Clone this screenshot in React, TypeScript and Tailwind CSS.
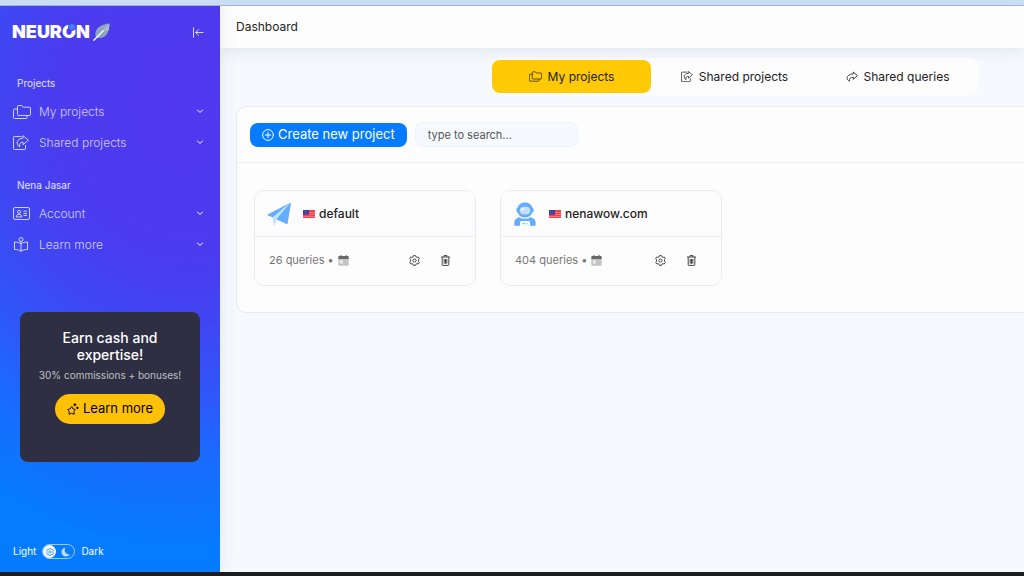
import React, { useState } from "react";

type IconProps = { className?: string };

const FoldersIcon: React.FC<IconProps> = ({ className }) => (
  <svg viewBox="0 0 18 14" fill="none" stroke="currentColor" strokeLinejoin="round" className={className} aria-hidden="true">
    <path d="M4.500 1.300c0-.4.3-.8.8-.8h3.400l1.600 1.700h6.400c.4 0 .8.300.8.800v6.600c0 .5-.4.900-.8.900H5.300c-.5 0-.8-.4-.8-.9z" />
    <path d="M4.500 4H1.300c-.4 0-.8.4-.8.800v7.900c0 .4.4.8.8.8h11.900c.4 0 .8-.4.8-.8v-2.200" />
  </svg>
);

const ShareBoxIcon: React.FC<IconProps> = ({ className }) => (
  <svg viewBox="0 0 16 15" fill="none" stroke="currentColor" strokeLinejoin="round" className={className} aria-hidden="true">
    <path d="M8.500 1.500H1.300c-.5 0-.8.300-.8.800v11.400c0 .5.300.8.8.8h10.400c.5 0 .8-.3.8-.8V10" />
    <path d="M10 .7 15.400 5.200 10 9.700V7.200C7.400 7 6.300 8.300 6.600 11.800 2.600 9.500 3.300 3.600 10 3.200z" />
  </svg>
);

const ArrowIcon: React.FC<IconProps> = ({ className }) => (
  <svg viewBox="0 0 14 12" fill="none" stroke="currentColor" strokeLinejoin="round" className={className} aria-hidden="true">
    <path d="M8.500.8 13.400 5 8.500 9.200V6.900C5.300 6.700 3.800 8.500 4 11.300-.8 9.500.5 3.200 8.500 3.100z" />
  </svg>
);

const AccountIcon: React.FC<IconProps> = ({ className }) => (
  <svg viewBox="0 0 17 13" fill="none" stroke="currentColor" className={className} aria-hidden="true">
    <rect x=".5" y=".5" width="16" height="12" rx="1.500" />
    <circle cx="6" cy="4.800" r="1.500" />
    <path d="M3.200 10c0-3.600 5.600-3.600 5.600 0zM10.500 4.200h3.500M10.500 6.500h3.500M10.500 8.500h3.500" />
  </svg>
);

const ReaderIcon: React.FC<IconProps> = ({ className }) => (
  <svg viewBox="0 0 16 15" fill="none" stroke="currentColor" strokeLinejoin="round" className={className} aria-hidden="true">
    <circle cx="8" cy="2.500" r="2" />
    <path d="M8 6.800C6.500 5.600 4 5 1.500 5v7.500c2.500 0 5 .5 6.500 1.700 1.500-1.200 4-1.700 6.500-1.700V5C12 5 9.500 5.600 8 6.800zM8 4.500v10" />
  </svg>
);

const ChevronIcon: React.FC<IconProps> = ({ className }) => (
  <svg viewBox="0 0 8 5" fill="none" stroke="currentColor" strokeLinecap="round" strokeLinejoin="round" className={className} aria-hidden="true">
    <path d="M1.500 1 4 3.500 6.500 1" />
  </svg>
);

const CollapseIcon: React.FC<IconProps> = ({ className }) => (
  <svg viewBox="0 0 12 11" fill="none" stroke="currentColor" strokeLinecap="round" strokeLinejoin="round" className={className} aria-hidden="true">
    <path d="M1.500.7v9.600M11 5.500H3.700M6.500 2.700 3.700 5.500l2.800 2.800" />
  </svg>
);

const FeatherIcon: React.FC<IconProps> = ({ className }) => (
  <svg viewBox="0 0 17 18" className={className} aria-hidden="true">
    <path d="M16.500.5C9 1 3.500 4.500 2.500 9.500c-.3 1.500-.2 3 .3 4.500l1.200 1.200c5.500 0 9-1.700 10.500-5.200C15.700 7 16.300 4 16.500.5z" fill="#8fa3bd" />
    <path d="M16.500.5C13 3 10 6 7.500 9.500c3-1 6-1.600 8-1.800.6-2.500.9-4.900 1-7.200z" fill="#a9b8ca" />
    <path d="M.8 17.200 10 8" stroke="#fff" strokeWidth="1.300" strokeLinecap="round" />
  </svg>
);

const SparkleStarIcon: React.FC<IconProps> = ({ className }) => (
  <svg viewBox="0 0 13 13" fill="none" stroke="currentColor" strokeLinejoin="round" className={className} aria-hidden="true">
    <path d="M5.200 3.700 6.300 6.200 9 7 7.500 9.200l.3 3-2.800-1-2.800 1.100.2-3L.8 7.100l2.800-.9z" />
    <path d="M8.500.3v3.200M6.900 1.900h3.200M11.300 4v2.600M10 5.300h2.600" strokeWidth="1.300" />
  </svg>
);

const PlusCircleIcon: React.FC<IconProps> = ({ className }) => (
  <svg viewBox="0 0 12 12" fill="none" stroke="currentColor" strokeLinecap="round" className={className} aria-hidden="true">
    <circle cx="6" cy="6" r="5.400" />
    <path d="M6 3.300v5.400M3.300 6h5.400" />
  </svg>
);

const PlaneIcon: React.FC<IconProps> = ({ className }) => (
  <svg viewBox="0 0 24 24" className={className} aria-hidden="true">
    <path d="M23.200.8 1 12.300c-.5.300-.5 1 .1 1.200l4.800 1.900z" fill="#62adfd" />
    <path d="M5.900 15.400 23.200.8 9.300 17.200 7.900 23.200c-.3.500-1 .4-1.100-.2z" fill="#c3dffe" />
    <path d="M23.200.8c.4-.2.800.1.700.6L20.600 21.500c-.1.500-.6.800-1.100.6L9.300 17.200z" fill="#62adfd" />
  </svg>
);

const AstronautIcon: React.FC<IconProps> = ({ className }) => (
  <svg viewBox="0 0 22 24" className={className} aria-hidden="true">
    <path d="M11 .5a8 8 0 0 1 7.500 5.200c.7.200 1.100.8 1.100 1.600v1.600c0 .8-.5 1.400-1.200 1.600a8 8 0 0 1-14.800 0c-.7-.2-1.200-.8-1.200-1.600V7.300c0-.8.4-1.400 1.100-1.600A8 8 0 0 1 11 .5z" fill="#62adfd" />
    <rect x="5.800" y="4.800" width="10.400" height="7.600" rx="3.800" fill="#c3dffe" />
    <path d="M7.800 8.300c0-1 .6-1.700 1.700-1.700" stroke="#fff" strokeWidth="1.200" fill="none" strokeLinecap="round" />
    <path d="M5.500 15.300c3.300 2 7.700 2 11 0 3 .4 5.200 2.700 5.200 5.700v1.500c0 .8-.6 1.300-1.300 1.300H16v-3.300c0-.8-.6-1.400-1.400-1.400H7.400c-.8 0-1.400.6-1.400 1.400v3.300H1.600c-.7 0-1.300-.5-1.300-1.300V21c0-3 2.200-5.300 5.200-5.700z" fill="#62adfd" />
    <path d="M7.300 20.400h7.400v3.400H7.300z" fill="#eaf4ff" />
    <path d="M9 21.500h1.500M12.500 21.500h.8" stroke="#62adfd" />
  </svg>
);

const FlagIcon: React.FC<IconProps> = ({ className }) => (
  <svg viewBox="0 0 12 8" className={className} aria-hidden="true">
    <rect width="12" height="8" fill="#fb3d45" />
    <path d="M0 2.500h12M0 4.500h12M0 6.500h12" stroke="#ff9da0" strokeWidth=".6" />
    <rect width="6" height="4.800" fill="#3b3d9e" />
    <path d="M1 1.300h4M1 3.300h4" stroke="#8b8cd0" strokeWidth=".5" strokeDasharray=".6 .6" />
  </svg>
);

const CalendarIcon: React.FC<IconProps> = ({ className }) => (
  <svg viewBox="0 0 11 11" className={className} aria-hidden="true">
    <path d="M.3 4h10.400v6c0 .5-.4.8-.8.8H1.100c-.4 0-.8-.3-.8-.8z" fill="#c4c4c4" />
    <path d="M1.100 1h1V.2h1.400V1h4V.2h1.400V1h1c.4 0 .8.3.8.8v2.200H.3V1.800c0-.5.4-.8.8-.8z" fill="#686868" />
    <rect x="1.800" y="5.300" width="3" height="3.200" fill="#ececec" />
  </svg>
);

const GearIcon: React.FC<IconProps> = ({ className }) => (
  <svg viewBox="0 0 11 11" fill="none" stroke="currentColor" strokeLinejoin="round" className={className} aria-hidden="true">
    <path d="M4.500.6h2l.4 1.200 1.200.5 1.200-.3 1 1.600-.8 1v1.800l.8 1-1 1.600-1.200-.3-1.200.5-.4 1.200h-2l-.4-1.200-1.200-.5-1.200.3-1-1.600.8-1V4.600l-.8-1 1-1.600 1.200.3 1.200-.5z" />
    <circle cx="5.500" cy="5.500" r="1.600" />
  </svg>
);

const TrashIcon: React.FC<IconProps> = ({ className }) => (
  <svg viewBox="0 0 9 11" fill="none" stroke="currentColor" className={className} aria-hidden="true">
    <path d="M0 2h9M3 2V.6h3V2M1.200 2v7.800c0 .4.200.6.6.6h5.400c.4 0 .6-.2.6-.6V2M3.200 4v4.700M4.500 4v4.700M5.800 4v4.700" />
  </svg>
);

type NavItem = { label: string; icon: React.FC<IconProps>; iconClass: string };

const NAV: { title: string; items: NavItem[] }[] = [
  {
    title: "Projects",
    items: [
      { label: "My projects", icon: FoldersIcon, iconClass: "h-[14px] w-[18px]" },
      { label: "Shared projects", icon: ShareBoxIcon, iconClass: "h-[15px] w-4" },
    ],
  },
  {
    title: "Nena Jasar",
    items: [
      { label: "Account", icon: AccountIcon, iconClass: "h-[13px] w-[17px]" },
      { label: "Learn more", icon: ReaderIcon, iconClass: "h-[15px] w-4" },
    ],
  },
];

const TABS: NavItem[] = [
  { label: "My projects", icon: FoldersIcon, iconClass: "h-[11px] w-[13px]" },
  { label: "Shared projects", icon: ShareBoxIcon, iconClass: "h-[11px] w-3" },
  { label: "Shared queries", icon: ArrowIcon, iconClass: "h-[11px] w-3" },
];

const PROJECTS = [
  { name: "default", queries: 26, icon: PlaneIcon },
  { name: "nenawow.com", queries: 404, icon: AstronautIcon },
];

const Logo: React.FC = () => (
  <a href="#" className="flex items-center gap-[3px] text-white">
    <span className="text-[18px] leading-5 font-black">
      NEUR
      <span className="relative">
        O
        <span className="absolute top-[2px] right-0 size-2 rounded-full border border-[#4a3cef] bg-[#3f86f0]" />
      </span>
      N
    </span>
    <FeatherIcon className="h-[18px] w-[17px]" />
  </a>
);

const Sidebar: React.FC = () => {
  const [dark, setDark] = useState(false);

  return (
    <aside className="relative z-10 flex w-[220px] shrink-0 flex-col bg-[#057bff] bg-[radial-gradient(ellipse_400px_440px_at_190px_100px,#5038ee_0%,#4b3bef_34%,#4046f2_50%,#2f57f8_66%,#1a6bfd_80%,#057bff_100%)] text-white shadow-[0_0_16px_rgba(60,70,110,0.12)]">
      <div className="flex h-[52px] items-center justify-between pr-4 pl-3">
        <Logo />
        <button aria-label="Collapse menu" className="text-white/80">
          <CollapseIcon className="h-[11px] w-3" />
        </button>
      </div>

      <nav>
        {NAV.map((section) => (
          <div key={section.title} className="pt-4 pb-[2px]">
            <h2 className="mb-1 pl-[17px] text-[10px] leading-[18px] text-white/85">{section.title}</h2>
            {section.items.map(({ label, icon: Icon, iconClass }) => (
              <button key={label} className="flex h-[31px] w-full items-center pr-4 pl-[13px] text-white/75">
                <span className="flex w-[26px] items-center">
                  <Icon className={iconClass} />
                </span>
                <span className="text-xs font-light">{label}</span>
                <ChevronIcon className="ml-auto h-[5px] w-2 text-white" />
              </button>
            ))}
          </div>
        ))}
      </nav>

      <div className="mx-5 mt-[50px] flex h-[150px] flex-col items-center rounded-lg bg-[#2f2f43] px-4 pt-[17px] text-center">
        <h3 className="px-4 text-[14px] leading-[17px] font-medium">Earn cash and expertise!</h3>
        <p className="mt-[3px] text-[10px] leading-[18px] whitespace-nowrap text-white/70">30% commissions + bonuses!</p>
        <button className="mt-[10px] flex h-[30px] items-center gap-1 rounded-full bg-[#ffc107] px-3 text-[13px] text-black">
          <SparkleStarIcon className="size-3" />
          Learn more
        </button>
      </div>

      <div className="mt-auto flex h-[41px] items-center gap-[6px] pl-[13px] text-[10px]">
        <span>Light</span>
        <button
          role="switch"
          aria-checked={dark}
          aria-label="Dark theme"
          onClick={() => setDark(!dark)}
          className="flex h-[15px] w-[33px] items-center justify-between rounded-full border border-white/60 pr-1"
        >
          <span className="flex size-[13px] items-center justify-center rounded-full bg-white text-[#057bff]">
            <GearIcon className="size-[8px]" />
          </span>
          <svg viewBox="0 0 9 10" fill="currentColor" className="h-[10px] w-[9px] text-white/75" aria-hidden="true">
            <path d="M4.500.5C1.500 1 .3 3 .5 5.500.8 8 2.500 9.500 5 9.500c1.700 0 3-.8 3.800-2.200-3.800.5-6.300-3-4.300-6.800z" />
          </svg>
        </button>
        <span>Dark</span>
      </div>
    </aside>
  );
};

const ProjectCard: React.FC<(typeof PROJECTS)[number]> = ({ name, queries, icon: Icon }) => (
  <article className="w-[222px] rounded-[10px] border border-[#e9ebf1]">
    <div className="flex h-[46px] items-center border-b border-[#e9ebf1] pl-3">
      <Icon className="size-6" />
      <FlagIcon className="ml-3 h-2 w-3" />
      <h3 className="ml-1 text-xs font-medium text-[#222]">{name}</h3>
    </div>
    <div className="flex h-12 items-center pr-6 pb-px pl-[14px] text-[#444]">
      <span className="text-[11px] text-[#777]">{queries} queries •</span>
      <CalendarIcon className="ml-1 size-[11px]" />
      <button aria-label="Project settings" className="ml-auto">
        <GearIcon className="size-[11px]" />
      </button>
      <button aria-label="Delete project" className="ml-5">
        <TrashIcon className="h-[11px] w-[11px]" />
      </button>
    </div>
  </article>
);

const App: React.FC = () => {
  const [tab, setTab] = useState("My projects");

  return (
    <div className="flex min-h-screen flex-col overflow-hidden border-t-[5px] border-b-4 border-t-[#cbdcf5] border-b-[#1c1d1f] font-[Inter,sans-serif] text-[#222]">
      <div className="flex flex-1 border-t border-[#a9b9dc]">
        <Sidebar />

        <div className="flex min-w-0 flex-1 flex-col bg-[#f6faff]">
          <header className="flex h-[42px] items-center bg-[#fdfdfd] px-4 shadow-[0_4px_16px_rgba(60,70,100,0.1)]">
            <h1 className="text-xs">Dashboard</h1>
          </header>

          <main className="relative pt-[10px] pl-4">
            <div className="mr-[45px] ml-auto flex w-fit gap-1 rounded-[10px] bg-[#fdfdfd] py-[2px] pr-[2px]">
              {TABS.map(({ label, icon: Icon, iconClass }) => (
                <button
                  key={label}
                  onClick={() => setTab(label)}
                  className={`flex h-[33px] w-[159px] items-center justify-center gap-[6px] rounded-lg text-xs ${
                    tab === label ? "bg-[#ffc905]" : ""
                  }`}
                >
                  <Icon className={iconClass} />
                  {label}
                </button>
              ))}
            </div>

            <section className="mt-[11px] rounded-l-[10px] border border-r-0 border-[#e6ebf2] bg-[#fdfdfd]">
              <div className="flex h-14 items-center gap-2 border-b border-[#eceff3] pl-[13px]">
                <button className="flex h-6 items-center gap-1 rounded-lg bg-[#057bff] px-3 text-[13px] text-white">
                  <PlusCircleIcon className="size-3" />
                  Create new project
                </button>
                <input
                  type="search"
                  aria-label="Search projects"
                  placeholder="type to search..."
                  className="h-[25px] w-[163px] rounded-lg border border-[#edf3fb] bg-[#f6faff] px-3 text-[11px] placeholder:text-[#555]"
                />
              </div>
              <div className="flex flex-wrap gap-6 px-[17px] pt-[27px] pb-[26px]">
                {PROJECTS.map((project) => (
                  <ProjectCard key={project.name} {...project} />
                ))}
              </div>
            </section>
          </main>
        </div>
      </div>
    </div>
  );
};

export default App;
